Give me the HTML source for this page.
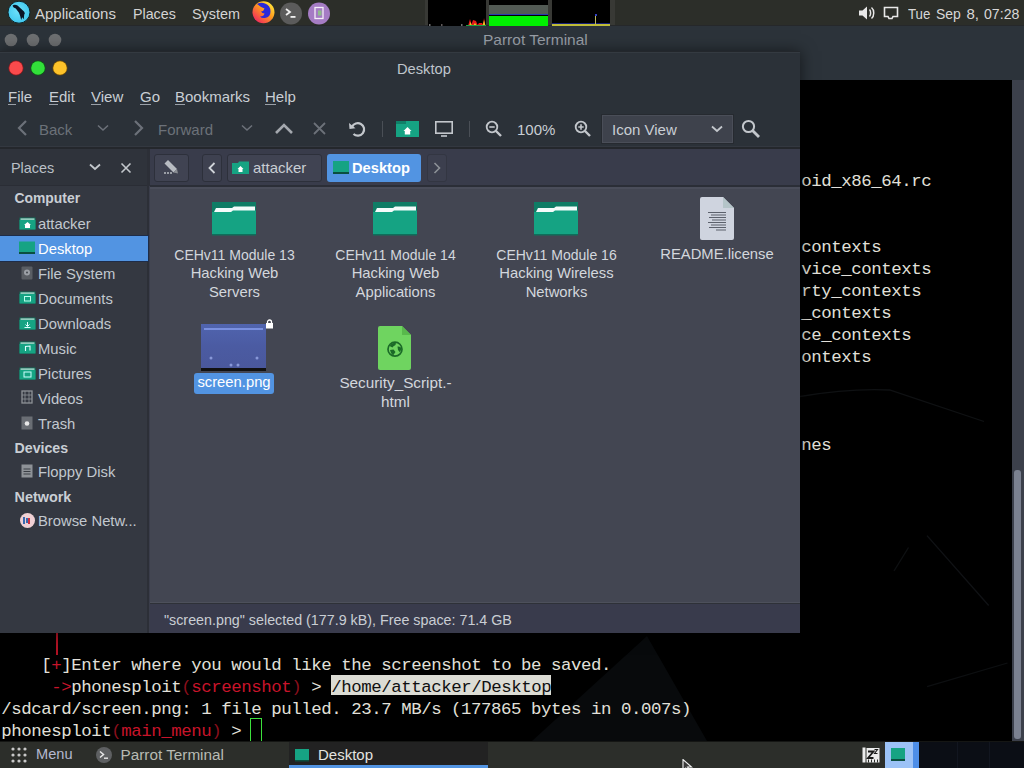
<!DOCTYPE html>
<html><head><meta charset="utf-8">
<style>
*{margin:0;padding:0;box-sizing:border-box}
html,body{width:1024px;height:768px;overflow:hidden;background:#000;font-family:'Liberation Sans',sans-serif;position:relative}
.r{position:absolute;display:block}
.t{position:absolute;white-space:pre;line-height:1}
.c{text-align:center}
.m{position:absolute;white-space:pre;font-family:'Liberation Mono',monospace;font-size:17.4px;letter-spacing:-0.44px;line-height:22px;height:22px}
</style></head><body>
<div class="r" style="left:0;top:0;width:1024px;height:26px;z-index:5">
<div class="r" style="left:0px;top:0px;width:1024px;height:25px;background:#2c2e29;"></div>
<div class="r" style="left:0px;top:25px;width:1024px;height:1px;background:#26282a;"></div>
<svg class="r" style="left:7px;top:1px;" width="24" height="24" viewBox="0 0 24 24"><defs><radialGradient id="plg" cx="0.45" cy="0.45" r="0.6"><stop offset="0" stop-color="#6ee0fa"/><stop offset="1" stop-color="#3cc6ee"/></radialGradient></defs><circle cx="12" cy="11.2" r="11" fill="url(#plg)" stroke="#10262c" stroke-width="1"/><path d="M5.5 4.8 Q7.5 3 10.5 4.6 L17 10.5 Q18.6 12.2 17.2 13.8 L16.8 18.2 L15.2 16.2 L14.2 19 Q13.2 14.5 12 11.8 L8.8 7.5 Q6.2 7 5.5 4.8 Z" fill="#0a1426"/></svg>
<div class="t" style="left:35px;top:6.30px;font-size:15px;color:#d4d4d4;font-weight:normal;font-family:'Liberation Sans',sans-serif;">Applications</div>
<div class="t" style="left:132.5px;top:6.30px;font-size:15px;color:#d4d4d4;font-weight:normal;font-family:'Liberation Sans',sans-serif;transform:scaleX(0.95);transform-origin:0 0">Places</div>
<div class="t" style="left:191.5px;top:6.30px;font-size:15px;color:#d4d4d4;font-weight:normal;font-family:'Liberation Sans',sans-serif;transform:scaleX(0.96);transform-origin:0 0">System</div>
<svg class="r" style="left:252px;top:1px;" width="24" height="24" viewBox="0 0 24 24"><defs><linearGradient id="ff" x1="0.9" y1="0.1" x2="0.2" y2="0.9"><stop offset="0" stop-color="#ffe83a"/><stop offset="0.45" stop-color="#ff9a1e"/><stop offset="1" stop-color="#f2305a"/></linearGradient></defs><circle cx="11.5" cy="11.3" r="11" fill="url(#ff)"/><path d="M5 3 Q9 1 13 2.5 Q18.5 4.5 18.5 10.5 Q18.5 16 13 17 Q9.5 17.5 8 15.5 Q12 15.5 12.5 12.5 Q10 12.5 9 10.5 Q12 10 12.5 7.5 Q9 6.5 5 3 Z" fill="#2a2ad8"/></svg>
<svg class="r" style="left:279px;top:1px;" width="24" height="24" viewBox="0 0 24 24"><circle cx="12" cy="12.5" r="11" fill="#5b5b5b"/><path d="M7 8 L11 11 L7 14" stroke="#f0f0f0" stroke-width="1.8" fill="none"/><rect x="11.5" y="15" width="5" height="1.8" fill="#f0f0f0"/></svg>
<svg class="r" style="left:307px;top:1px;" width="24" height="24" viewBox="0 0 24 24"><circle cx="12" cy="12.5" r="11" fill="#a57cc4"/><rect x="8" y="6.5" width="8" height="11" fill="none" stroke="#f4eef8" stroke-width="1.3"/><rect x="11" y="9.5" width="3.5" height="5" fill="#8fbf8a"/></svg>
<div class="r" style="left:425px;top:0px;width:190px;height:25px;background:#383935;"></div>
<div class="r" style="left:428px;top:0px;width:58px;height:26px;background:#000;"></div>
<svg class="r" style="left:428px;top:0px;" width="58" height="26" viewBox="0 0 58 26"><rect x="1" y="24" width="1.5" height="2" fill="#707070"/><rect x="13" y="24" width="1.5" height="2" fill="#605a5a"/><rect x="33" y="24" width="1.5" height="2" fill="#707070"/><path d="M40 26 L42 19 L44 26 Z M43 26 L45 20 L48 21 L50 26 Z M49 26 L51 23 L54 23 L56 26 Z M55 26 L56 18 L57.5 26 Z" fill="#e81818"/><path d="M41 26 L42.5 22 L44 26 Z M54.5 26 L56 20 L57.5 26 Z M45 26 L47 23 L49 26 Z" fill="#e8d020"/><rect x="38" y="25" width="20" height="1" fill="#20a040"/></svg>
<div class="r" style="left:489px;top:0px;width:59px;height:26px;background:#000;"></div>
<div class="r" style="left:489px;top:5px;width:59px;height:8.5px;background:#525a54;"></div>
<div class="r" style="left:489px;top:13.5px;width:59px;height:1.5px;background:#2a3ab0;"></div>
<div class="r" style="left:489px;top:15.5px;width:59px;height:10.5px;background:#00f000;"></div>
<div class="r" style="left:552px;top:0px;width:58px;height:26px;background:#000;"></div>
<div class="r" style="left:552px;top:23px;width:58px;height:1px;background:#16207a;"></div>
<div class="r" style="left:552px;top:24px;width:58px;height:2px;background:#c0bc38;"></div>
<div class="r" style="left:595px;top:15px;width:1.2px;height:9px;background:#b8b860;"></div>
<div class="r" style="left:594.5px;top:14px;width:2px;height:2px;background:#3040c0;"></div>
<svg class="r" style="left:857px;top:5px;" width="20" height="16" viewBox="0 0 20 16"><path d="M2 5.5 L5.5 5.5 L10 1.5 L10 14.5 L5.5 10.5 L2 10.5 Z" fill="#e8e8e8"/><path d="M12.5 4.5 C14 6 14 10 12.5 11.5" stroke="#e8e8e8" stroke-width="1.5" fill="none"/><path d="M14.5 2.5 C17.5 5 17.5 11 14.5 13.5" stroke="#e8e8e8" stroke-width="1.5" fill="none"/></svg>
<svg class="r" style="left:883px;top:6px;" width="17" height="15" viewBox="0 0 17 15"><path d="M1.5 1.5 L14.5 1.5 L14.5 10.5 L10 10.5 L9 12.5 L6 12.5 L5 10.5 L1.5 10.5 Z" fill="none" stroke="#e8e8e8" stroke-width="1.6"/></svg>
<div class="t" style="left:908px;top:6.30px;font-size:15px;color:#d8d8d8;font-weight:normal;font-family:'Liberation Sans',sans-serif;transform:scaleX(0.885);transform-origin:0 0">Tue</div>
<div class="t" style="left:935.6px;top:6.30px;font-size:15px;color:#d8d8d8;font-weight:normal;font-family:'Liberation Sans',sans-serif;transform:scaleX(0.93);transform-origin:0 0">Sep</div>
<div class="t" style="left:966.5px;top:6.30px;font-size:15px;color:#d8d8d8;font-weight:normal;font-family:'Liberation Sans',sans-serif;">8,</div>
<div class="t" style="left:983.5px;top:6.64px;font-size:14.6px;color:#d8d8d8;font-weight:normal;font-family:'Liberation Sans',sans-serif;transform:scaleX(0.97);transform-origin:0 0">07:28</div>
</div>
<div class="r" style="left:0px;top:26px;width:1024px;height:54px;background:#2c333a;"></div>
<svg class="r" style="left:3px;top:32px;" width="16" height="16" viewBox="0 0 16 16"><circle cx="8" cy="8" r="6.3" fill="#6d6f71"/></svg>
<svg class="r" style="left:25px;top:32px;" width="16" height="16" viewBox="0 0 16 16"><circle cx="8" cy="8" r="6.3" fill="#6d6f71"/></svg>
<svg class="r" style="left:47px;top:32px;" width="16" height="16" viewBox="0 0 16 16"><circle cx="8" cy="8" r="6.3" fill="#6d6f71"/></svg>
<div class="t" style="left:483px;top:32.38px;font-size:15.5px;color:#989ea6;font-weight:normal;font-family:'Liberation Sans',sans-serif;">Parrot Terminal</div>
<div class="r" style="left:0px;top:80px;width:1012px;height:661px;background:#000;"></div>
<svg class="r" style="left:0px;top:80px;" width="1012" height="661" viewBox="0 0 1012 661"><path d="M532 661 L647 556 L707 661 Z" fill="#080a0c"/><path d="M800 316.5 Q850 308 889.6 310 L984 341.5" stroke="#0f1113" stroke-width="1.3" fill="none"/><path d="M927 455.6 L988.7 525.5" stroke="#101215" stroke-width="1.3" fill="none"/><path d="M908.5 467.5 L894 491" stroke="#0e1012" stroke-width="1.3" fill="none"/><path d="M927 606.6 L1007.5 583" stroke="#0d0f11" stroke-width="1.3" fill="none"/></svg>
<div class="r" style="left:1012px;top:80px;width:12px;height:661px;background:#3c404b;"></div>
<div class="r" style="left:1014px;top:470px;width:7px;height:269px;background:#7b8190;border-radius:3px"></div>
<div class="m" style="left:801.3px;top:171px;color:#e2e0da">oid_x86_64.rc</div>
<div class="m" style="left:801.3px;top:237px;color:#e2e0da">contexts</div>
<div class="m" style="left:801.3px;top:259px;color:#e2e0da">vice_contexts</div>
<div class="m" style="left:801.3px;top:281px;color:#e2e0da">rty_contexts</div>
<div class="m" style="left:801.3px;top:303px;color:#e2e0da">_contexts</div>
<div class="m" style="left:801.3px;top:325px;color:#e2e0da">ce_contexts</div>
<div class="m" style="left:801.3px;top:347px;color:#e2e0da">ontexts</div>
<div class="m" style="left:801.3px;top:435px;color:#e2e0da">nes</div>
<div class="r" style="left:56px;top:633px;width:1.5px;height:22px;background:#b01224;"></div>
<div class="m" style="left:41.3px;top:655px;color:#e2e0da">[</div>
<div class="m" style="left:51.3px;top:655px;color:#c8142a">+</div>
<div class="m" style="left:61.3px;top:655px;color:#e2e0da">]Enter where you would like the screenshot to be saved.</div>
<div class="m" style="left:51.3px;top:677px;color:#c8142a">-></div>
<div class="m" style="left:71.3px;top:677px;color:#e2e0da">phonesploit</div>
<div class="m" style="left:181.3px;top:677px;color:#8a0f1c">(</div>
<div class="m" style="left:191.3px;top:677px;color:#c8142a">screenshot</div>
<div class="m" style="left:291.3px;top:677px;color:#8a0f1c">)</div>
<div class="m" style="left:301.3px;top:677px;color:#e2e0da"> > </div>
<div class="r" style="left:331px;top:675px;width:220px;height:20px;background:#dcdcd4;"></div>
<div class="m" style="left:331.3px;top:677px;color:#101010">/home/attacker/Desktop</div>
<div class="m" style="left:1.3px;top:699px;color:#e2e0da">/sdcard/screen.png: 1 file pulled. 23.7 MB/s (177865 bytes in 0.007s)</div>
<div class="m" style="left:1.3px;top:721px;color:#e2e0da">phonesploit</div>
<div class="m" style="left:111.3px;top:721px;color:#8a0f1c">(</div>
<div class="m" style="left:121.3px;top:721px;color:#c8142a">main_menu</div>
<div class="m" style="left:211.3px;top:721px;color:#8a0f1c">)</div>
<div class="m" style="left:221.3px;top:721px;color:#e2e0da"> > </div>
<div class="r" style="left:250px;top:718px;width:12px;height:23.5px;background:transparent;border:1.5px solid #3ce03c"></div>
<div id="fmwrap">
<div class="r" style="left:0px;top:52px;width:800px;height:581px;background:#2b3138;box-shadow:0 0 14px 1px rgba(0,0,0,0.5)"></div>
<div class="r" style="left:0px;top:51px;width:800px;height:1px;background:#23272c;"></div>
<div class="r" style="left:0px;top:52px;width:800px;height:1px;background:#343a41;"></div>
<svg class="r" style="left:7px;top:59px;" width="18" height="18" viewBox="0 0 18 18"><circle cx="9" cy="9" r="7.6" fill="#8a1a1e"/><circle cx="9" cy="9" r="6.8" fill="#fa4a4c"/></svg>
<svg class="r" style="left:29px;top:59px;" width="18" height="18" viewBox="0 0 18 18"><circle cx="9" cy="9" r="7.6" fill="#0c5a14"/><circle cx="9" cy="9" r="6.8" fill="#32e03a"/></svg>
<svg class="r" style="left:51px;top:59px;" width="18" height="18" viewBox="0 0 18 18"><circle cx="9" cy="9" r="7.6" fill="#6a4a08"/><circle cx="9" cy="9" r="6.8" fill="#fdc22a"/></svg>
<div class="t" style="left:397px;top:61.56px;font-size:14.7px;color:#bfc5cc;font-weight:normal;font-family:'Liberation Sans',sans-serif;">Desktop</div>
<div class="t" style="left:8px;top:89.30px;font-size:15px;color:#c9ced4;font-weight:normal;font-family:'Liberation Sans',sans-serif;">File</div>
<div class="t" style="left:49px;top:89.30px;font-size:15px;color:#c9ced4;font-weight:normal;font-family:'Liberation Sans',sans-serif;">Edit</div>
<div class="t" style="left:91px;top:89.30px;font-size:15px;color:#c9ced4;font-weight:normal;font-family:'Liberation Sans',sans-serif;">View</div>
<div class="t" style="left:140px;top:89.30px;font-size:15px;color:#c9ced4;font-weight:normal;font-family:'Liberation Sans',sans-serif;">Go</div>
<div class="t" style="left:175px;top:89.30px;font-size:15px;color:#c9ced4;font-weight:normal;font-family:'Liberation Sans',sans-serif;">Bookmarks</div>
<div class="t" style="left:265px;top:89.30px;font-size:15px;color:#c9ced4;font-weight:normal;font-family:'Liberation Sans',sans-serif;">Help</div>
<div class="r" style="left:8px;top:104px;width:8px;height:1px;background:#9aa0a8;"></div>
<div class="r" style="left:49px;top:104px;width:9px;height:1px;background:#9aa0a8;"></div>
<div class="r" style="left:91px;top:104px;width:10px;height:1px;background:#9aa0a8;"></div>
<div class="r" style="left:140px;top:104px;width:11px;height:1px;background:#9aa0a8;"></div>
<div class="r" style="left:175px;top:104px;width:10px;height:1px;background:#9aa0a8;"></div>
<div class="r" style="left:265px;top:104px;width:11px;height:1px;background:#9aa0a8;"></div>
<svg class="r" style="left:12px;top:118px;" width="20" height="20" viewBox="0 0 20 20"><path d="M14 3 L7 10 L14 17" stroke="#6c7179" stroke-width="2.2" fill="none"/></svg>
<div class="t" style="left:39px;top:122.30px;font-size:15px;color:#6c7179;font-weight:normal;font-family:'Liberation Sans',sans-serif;">Back</div>
<svg class="r" style="left:95px;top:121px;" width="16" height="14" viewBox="0 0 16 14"><path d="M3 4.5 L8 9 L13 4.5" stroke="#6c7179" stroke-width="1.6" fill="none"/></svg>
<svg class="r" style="left:129px;top:118px;" width="20" height="20" viewBox="0 0 20 20"><path d="M6 3 L13 10 L6 17" stroke="#6c7179" stroke-width="2.2" fill="none"/></svg>
<div class="t" style="left:158px;top:122.30px;font-size:15px;color:#6c7179;font-weight:normal;font-family:'Liberation Sans',sans-serif;">Forward</div>
<svg class="r" style="left:239px;top:121px;" width="16" height="14" viewBox="0 0 16 14"><path d="M3 4.5 L8 9 L13 4.5" stroke="#6c7179" stroke-width="1.6" fill="none"/></svg>
<svg class="r" style="left:273px;top:120px;" width="22" height="18" viewBox="0 0 22 18"><path d="M3 13 L11 5 L19 13" stroke="#a4a8ae" stroke-width="2.6" fill="none"/></svg>
<svg class="r" style="left:311px;top:120px;" width="18" height="18" viewBox="0 0 18 18"><path d="M3 3 L14 14 M14 3 L3 14" stroke="#6c7179" stroke-width="1.8" fill="none"/></svg>
<svg class="r" style="left:347px;top:119px;" width="20" height="20" viewBox="0 0 20 20"><path d="M5 8 A6.3 6.3 0 1 1 6.5 15" stroke="#c3c7cc" stroke-width="2.2" fill="none"/><path d="M2 4 L2.5 10 L8.5 9.2 Z" fill="#c3c7cc"/></svg>
<div class="r" style="left:382px;top:121px;width:1px;height:16px;background:#4a4f56;"></div>
<svg class="r" style="left:396px;top:120px;" width="23" height="18" viewBox="0 0 23 18"><path d="M0 3 L9 3 L10 1 L23 1 L23 17 L0 17 Z" fill="#16a383"/><rect x="0" y="1" width="10" height="3" fill="#108068"/><path d="M7.5 11 L11.5 7 L15.5 11 L14.2 11 L14.2 14.5 L8.8 14.5 L8.8 11 Z" fill="#fff"/></svg>
<svg class="r" style="left:434px;top:120px;" width="20" height="18" viewBox="0 0 20 18"><rect x="1.8" y="1.8" width="16.4" height="11.4" fill="none" stroke="#c3c7cc" stroke-width="1.6"/><rect x="7" y="15.2" width="6" height="1.6" fill="#c3c7cc"/></svg>
<div class="r" style="left:469px;top:121px;width:1px;height:16px;background:#4a4f56;"></div>
<svg class="r" style="left:484px;top:119px;" width="20" height="20" viewBox="0 0 20 20"><circle cx="8" cy="8" r="5.3" stroke="#c3c7cc" stroke-width="1.8" fill="none"/><path d="M12 12 L17 17" stroke="#c3c7cc" stroke-width="2.4"/><path d="M5.3 8 L10.7 8" stroke="#c3c7cc" stroke-width="1.6"/></svg>
<div class="t" style="left:517px;top:122.30px;font-size:15px;color:#c9ced4;font-weight:normal;font-family:'Liberation Sans',sans-serif;">100%</div>
<svg class="r" style="left:573px;top:119px;" width="20" height="20" viewBox="0 0 20 20"><circle cx="8" cy="8" r="5.3" stroke="#c3c7cc" stroke-width="1.8" fill="none"/><path d="M12 12 L17 17" stroke="#c3c7cc" stroke-width="2.4"/><path d="M5.3 8 L10.7 8 M8 5.3 L8 10.7" stroke="#c3c7cc" stroke-width="1.6"/></svg>
<div class="r" style="left:602px;top:115px;width:131px;height:28px;background:#3e424c;border:1px solid #4a4e58;box-shadow:0 0 0 1px #262a30"></div>
<div class="t" style="left:612px;top:121.80px;font-size:15px;color:#c9ced4;font-weight:normal;font-family:'Liberation Sans',sans-serif;">Icon View</div>
<svg class="r" style="left:709px;top:122px;" width="16" height="14" viewBox="0 0 16 14"><path d="M3 4.5 L8 9 L13 4.5" stroke="#c3c7cc" stroke-width="1.8" fill="none"/></svg>
<svg class="r" style="left:740px;top:118px;" width="22" height="22" viewBox="0 0 22 22"><circle cx="8.5" cy="8.5" r="5.6" stroke="#c3c7cc" stroke-width="2" fill="none"/><path d="M12.5 12.5 L19 19" stroke="#c3c7cc" stroke-width="2.8"/></svg>
<div class="r" style="left:0px;top:146px;width:800px;height:1px;background:#333840;"></div>
<div class="r" style="left:0px;top:147px;width:800px;height:2px;background:#24272c;"></div>
<div class="r" style="left:0px;top:149px;width:148px;height:37px;background:#2f333b;"></div>
<div class="t" style="left:11px;top:160.81px;font-size:14.4px;color:#bac0c7;font-weight:normal;font-family:'Liberation Sans',sans-serif;">Places</div>
<svg class="r" style="left:87px;top:160px;" width="16" height="14" viewBox="0 0 16 14"><path d="M3 4.5 L8 9 L13 4.5" stroke="#c3c7cc" stroke-width="1.8" fill="none"/></svg>
<svg class="r" style="left:119px;top:161px;" width="15" height="14" viewBox="0 0 15 14"><path d="M2.5 2.5 L11.5 11.5 M11.5 2.5 L2.5 11.5" stroke="#c3c7cc" stroke-width="1.6" fill="none"/></svg>
<div class="r" style="left:0px;top:185px;width:148px;height:1px;background:#2a2d35;"></div>
<div class="r" style="left:147px;top:149px;width:3px;height:484px;background:#2c2f37;"></div>
<div class="r" style="left:149px;top:186px;width:1px;height:447px;background:#3a3d4a;"></div>
<div class="r" style="left:150px;top:149px;width:650px;height:37px;background:#393c4b;"></div>
<div class="r" style="left:150px;top:185px;width:650px;height:2px;background:#2b2e37;"></div>
<div class="r" style="left:150px;top:187px;width:650px;height:2px;background:#4a4d5a;"></div>
<div class="r" style="left:154px;top:154px;width:35px;height:28px;background:#404352;border:1px solid #2d303b;border-radius:3px"></div>
<svg class="r" style="left:160px;top:158px;" width="22" height="20" viewBox="0 0 22 20"><path d="M8 2 L17 11 L13.5 14.5 L4.5 5.5 Z" fill="#b8bcc2"/><path d="M13.5 14.5 L17 11 L18 15.5 Z" fill="#8a8e94"/><circle cx="5" cy="15" r="1" fill="#b8bcc2"/><circle cx="8" cy="15" r="1" fill="#b8bcc2"/><circle cx="11" cy="15" r="1" fill="#b8bcc2"/></svg>
<div class="r" style="left:202px;top:154px;width:20px;height:28px;background:#3e4150;border:1px solid #2d303b;border-radius:3px"></div>
<svg class="r" style="left:204px;top:160px;" width="16" height="16" viewBox="0 0 16 16"><path d="M10.5 3 L5.5 8 L10.5 13" stroke="#d0d4d9" stroke-width="1.8" fill="none"/></svg>
<div class="r" style="left:227px;top:154px;width:95px;height:28px;background:#404352;border:1px solid #2d303b;border-radius:3px"></div>
<svg class="r" style="left:232px;top:161px;" width="17" height="13" viewBox="0 0 17 13"><path d="M0 2 L6 2 L7 0.5 L17 0.5 L17 13 L0 13 Z" fill="#16a383"/><path d="M5.5 8 L8.5 5 L11.5 8 L10.5 8 L10.5 11 L6.5 11 L6.5 8 Z" fill="#fff"/></svg>
<div class="t" style="left:253px;top:160.30px;font-size:15px;color:#c9ced4;font-weight:normal;font-family:'Liberation Sans',sans-serif;">attacker</div>
<div class="r" style="left:327px;top:154px;width:94px;height:28px;background:#5294e2;border-radius:3px"></div>
<svg class="r" style="left:333px;top:161px;" width="16" height="13" viewBox="0 0 16 13"><rect x="0" y="0" width="16" height="13" fill="#16a383"/><rect x="0" y="11" width="16" height="2" fill="#0b4f40"/></svg>
<div class="t" style="left:352px;top:160.56px;font-size:14.7px;color:#ffffff;font-weight:bold;font-family:'Liberation Sans',sans-serif;">Desktop</div>
<div class="r" style="left:427px;top:154px;width:20px;height:28px;background:#3c3f4e;border:1px solid #333642;border-radius:3px"></div>
<svg class="r" style="left:429px;top:160px;" width="16" height="16" viewBox="0 0 16 16"><path d="M5.5 3 L10.5 8 L5.5 13" stroke="#8d9197" stroke-width="1.6" fill="none"/></svg>
<div class="r" style="left:0px;top:186px;width:147px;height:447px;background:#343841;"></div>
<div class="t" style="left:14.5px;top:192.23px;font-size:13.9px;color:#c9ced4;font-weight:bold;font-family:'Liberation Sans',sans-serif;">Computer</div>
<div class="r" style="left:0px;top:235px;width:149px;height:27px;background:#1e2c48;"></div>
<div class="r" style="left:0px;top:236px;width:148px;height:25px;background:#5294e2;"></div>
<div class="t" style="left:38px;top:216.97px;font-size:14.8px;color:#c2c8cf;font-weight:normal;font-family:'Liberation Sans',sans-serif;">attacker</div>
<svg class="r" style="left:19px;top:217px;" width="17" height="13" viewBox="0 0 17 13"><rect x="0.5" y="0.5" width="16" height="12" fill="#0f6e5a"/><rect x="1.5" y="1.5" width="14" height="1.3" fill="#d8efe8"/><rect x="0.5" y="2.8" width="16" height="9.7" fill="#16a383"/><path d="M5 8 L8.5 5 L12 8 L11 8 L11 11 L6 11 L6 8 Z" fill="#fff"/></svg>
<div class="t" style="left:38px;top:241.97px;font-size:14.8px;color:#ffffff;font-weight:normal;font-family:'Liberation Sans',sans-serif;">Desktop</div>
<svg class="r" style="left:19px;top:241px;" width="17" height="13" viewBox="0 0 17 13"><rect x="0" y="0.5" width="16" height="12.5" fill="#16a383"/><rect x="0" y="11" width="16" height="2" fill="#0b4f40"/></svg>
<div class="t" style="left:38px;top:266.97px;font-size:14.8px;color:#c2c8cf;font-weight:normal;font-family:'Liberation Sans',sans-serif;">File System</div>
<svg class="r" style="left:21px;top:266px;" width="13" height="14" viewBox="0 0 13 14"><rect x="0.5" y="0.5" width="11" height="13" fill="#5a5e64" rx="1"/><circle cx="6" cy="6.5" r="3" fill="#9ca0a6"/><circle cx="6" cy="6.5" r="1" fill="#45494f"/></svg>
<div class="t" style="left:38px;top:291.97px;font-size:14.8px;color:#c2c8cf;font-weight:normal;font-family:'Liberation Sans',sans-serif;">Documents</div>
<svg class="r" style="left:19px;top:291px;" width="17" height="13" viewBox="0 0 17 13"><rect x="0.5" y="0.5" width="16" height="12" fill="#0f6e5a"/><rect x="1.5" y="1.5" width="14" height="1.3" fill="#d8efe8"/><rect x="0.5" y="2.8" width="16" height="9.7" fill="#16a383"/><rect x="5.5" y="5.5" width="6" height="4.5" fill="none" stroke="#bfe" stroke-width="1"/></svg>
<div class="t" style="left:38px;top:316.97px;font-size:14.8px;color:#c2c8cf;font-weight:normal;font-family:'Liberation Sans',sans-serif;">Downloads</div>
<svg class="r" style="left:19px;top:317px;" width="17" height="13" viewBox="0 0 17 13"><rect x="0.5" y="0.5" width="16" height="12" fill="#0f6e5a"/><rect x="1.5" y="1.5" width="14" height="1.3" fill="#d8efe8"/><rect x="0.5" y="2.8" width="16" height="9.7" fill="#16a383"/><path d="M8.5 5 L8.5 9 M6.5 7.5 L8.5 9.5 L10.5 7.5 M5.5 10.5 L11.5 10.5" stroke="#dff" stroke-width="1" fill="none"/></svg>
<div class="t" style="left:38px;top:341.97px;font-size:14.8px;color:#c2c8cf;font-weight:normal;font-family:'Liberation Sans',sans-serif;">Music</div>
<svg class="r" style="left:19px;top:341px;" width="17" height="13" viewBox="0 0 17 13"><rect x="0.5" y="0.5" width="16" height="12" fill="#0f6e5a"/><rect x="1.5" y="1.5" width="14" height="1.3" fill="#d8efe8"/><rect x="0.5" y="2.8" width="16" height="9.7" fill="#16a383"/><path d="M6.5 10 L6.5 5.5 L11 5 L11 9.5" stroke="#dff" stroke-width="1.1" fill="none"/></svg>
<div class="t" style="left:38px;top:366.97px;font-size:14.8px;color:#c2c8cf;font-weight:normal;font-family:'Liberation Sans',sans-serif;">Pictures</div>
<svg class="r" style="left:19px;top:367px;" width="17" height="13" viewBox="0 0 17 13"><rect x="0.5" y="0.5" width="16" height="12" fill="#0f6e5a"/><rect x="1.5" y="1.5" width="14" height="1.3" fill="#d8efe8"/><rect x="0.5" y="2.8" width="16" height="9.7" fill="#16a383"/><rect x="5" y="5" width="7" height="5" fill="none" stroke="#cff" stroke-width="1"/></svg>
<div class="t" style="left:38px;top:391.97px;font-size:14.8px;color:#c2c8cf;font-weight:normal;font-family:'Liberation Sans',sans-serif;">Videos</div>
<svg class="r" style="left:21px;top:390px;" width="13" height="14" viewBox="0 0 13 14"><rect x="1" y="1" width="10" height="12" fill="none" stroke="#8e9297" stroke-width="1.3"/><path d="M1 5 L11 5 M1 9 L11 9 M4 1 L4 13 M8 1 L8 13" stroke="#8e9297" stroke-width="0.8"/></svg>
<div class="t" style="left:38px;top:416.97px;font-size:14.8px;color:#c2c8cf;font-weight:normal;font-family:'Liberation Sans',sans-serif;">Trash</div>
<svg class="r" style="left:21px;top:416px;" width="13" height="14" viewBox="0 0 13 14"><rect x="0.5" y="0.5" width="11" height="13" fill="#6a6e74"/><circle cx="6" cy="7.5" r="2.3" fill="#e8e8e8"/></svg>
<div class="t" style="left:38px;top:465.47px;font-size:14.8px;color:#c2c8cf;font-weight:normal;font-family:'Liberation Sans',sans-serif;">Floppy Disk</div>
<svg class="r" style="left:21px;top:464px;" width="13" height="14" viewBox="0 0 13 14"><rect x="0.5" y="0.5" width="11" height="13" fill="#8e9297"/><path d="M2.5 5 L9.5 5 M2.5 7.5 L9.5 7.5 M2.5 10 L9.5 10" stroke="#3a3e44" stroke-width="1"/></svg>
<div class="t" style="left:38px;top:514.47px;font-size:14.8px;color:#c2c8cf;font-weight:normal;font-family:'Liberation Sans',sans-serif;">Browse Netw...</div>
<svg class="r" style="left:19px;top:512px;" width="17" height="17" viewBox="0 0 17 17"><circle cx="8.5" cy="8.5" r="7.5" fill="#f0d0d4"/><path d="M5 5 L5 12 M8 6 L8 11" stroke="#3a6ab0" stroke-width="2"/><path d="M10 6 L10 12" stroke="#d03040" stroke-width="2"/></svg>
<div class="t" style="left:14.5px;top:440.98px;font-size:14.2px;color:#c9ced4;font-weight:bold;font-family:'Liberation Sans',sans-serif;">Devices</div>
<div class="t" style="left:14.5px;top:489.81px;font-size:14.4px;color:#c9ced4;font-weight:bold;font-family:'Liberation Sans',sans-serif;">Network</div>
<div class="r" style="left:150px;top:189px;width:650px;height:414px;background:#434652;"></div>
<div class="r" style="left:150px;top:602px;width:650px;height:1px;background:#4d505b;"></div>
<div class="r" style="left:150px;top:603px;width:650px;height:1px;background:#2e3138;"></div>
<div class="r" style="left:150px;top:604px;width:650px;height:29px;background:#393b4c;"></div>
<div class="t" style="left:164px;top:612.90px;font-size:14.3px;color:#c9ced4;font-weight:normal;font-family:'Liberation Sans',sans-serif;">"screen.png" selected (177.9 kB), Free space: 71.4 GB</div>
<svg class="r" style="left:212px;top:201px;" width="46" height="36" viewBox="0 0 46 36"><path d="M0 1 L44 1 L44 12 L0 12 Z" fill="#0f7c65"/><path d="M4 7 L20 7 L22 5.5 L43 5.5 L43 11 L2 11 Z" fill="#f4fbfa"/><path d="M0 11 L19 11 L21 9.5 L44 9.5 L44 34 L0 34 Z" fill="#15a383"/><rect x="0" y="33" width="44" height="1.5" fill="#0e6f5b"/></svg>
<svg class="r" style="left:373px;top:201px;" width="46" height="36" viewBox="0 0 46 36"><path d="M0 1 L44 1 L44 12 L0 12 Z" fill="#0f7c65"/><path d="M4 7 L20 7 L22 5.5 L43 5.5 L43 11 L2 11 Z" fill="#f4fbfa"/><path d="M0 11 L19 11 L21 9.5 L44 9.5 L44 34 L0 34 Z" fill="#15a383"/><rect x="0" y="33" width="44" height="1.5" fill="#0e6f5b"/></svg>
<svg class="r" style="left:534px;top:201px;" width="46" height="36" viewBox="0 0 46 36"><path d="M0 1 L44 1 L44 12 L0 12 Z" fill="#0f7c65"/><path d="M4 7 L20 7 L22 5.5 L43 5.5 L43 11 L2 11 Z" fill="#f4fbfa"/><path d="M0 11 L19 11 L21 9.5 L44 9.5 L44 34 L0 34 Z" fill="#15a383"/><rect x="0" y="33" width="44" height="1.5" fill="#0e6f5b"/></svg>
<svg class="r" style="left:699px;top:196px;" width="36" height="46" viewBox="0 0 36 46"><path d="M1 3 Q1 1 3 1 L24 1 L35 12 L35 42 Q35 44 33 44 L3 44 Q1 44 1 42 Z" fill="#cfd4df"/><path d="M24 1 L35 12 L24 12 Z" fill="#b4c4c8"/><path d="M9 16.5 L27 16.5 M12 19 L27 19 M10 21.5 L27 21.5 M13 24 L27 24 M9 26.5 L27 26.5 M12 29 L27 29 M10 31.5 L27 31.5 M17 34 L27 34 " stroke="#5c616c" stroke-width="1.1"/></svg>
<div class="t c" style="left:134.5px;width:200px;top:248.15px;font-size:14px;color:#d3d7dd">CEHv11 Module 13</div>
<div class="t c" style="left:134.5px;width:200px;top:266.47px;font-size:14.8px;color:#d3d7dd">Hacking Web</div>
<div class="t c" style="left:134.5px;width:200px;top:285.47px;font-size:14.8px;color:#d3d7dd">Servers</div>
<div class="t c" style="left:295.5px;width:200px;top:248.15px;font-size:14px;color:#d3d7dd">CEHv11 Module 14</div>
<div class="t c" style="left:295.5px;width:200px;top:266.47px;font-size:14.8px;color:#d3d7dd">Hacking Web</div>
<div class="t c" style="left:295.5px;width:200px;top:285.47px;font-size:14.8px;color:#d3d7dd">Applications</div>
<div class="t c" style="left:456.5px;width:200px;top:248.15px;font-size:14px;color:#d3d7dd">CEHv11 Module 16</div>
<div class="t c" style="left:456.5px;width:200px;top:266.47px;font-size:14.8px;color:#d3d7dd">Hacking Wireless</div>
<div class="t c" style="left:456.5px;width:200px;top:285.47px;font-size:14.8px;color:#d3d7dd">Networks</div>
<div class="t c" style="left:617px;width:200px;top:247.47px;font-size:14.8px;color:#d3d7dd">README.license</div>
<svg class="r" style="left:201px;top:324px;" width="66" height="48" viewBox="0 0 66 48"><rect x="0" y="0" width="65" height="45" fill="#4a5cb0"/><rect x="0" y="0" width="65" height="45" fill="url(#thg)"/><defs><linearGradient id="thg" x1="0" y1="0" x2="0" y2="1"><stop offset="0" stop-color="#5064ae"/><stop offset="0.5" stop-color="#4b5ba2"/><stop offset="1" stop-color="#4a589c"/></linearGradient></defs><rect x="0" y="0" width="65" height="45" fill="url(#thg)"/><rect x="3" y="4" width="59" height="2" fill="#7a90e0"/><rect x="0" y="44" width="65" height="3" fill="#111"/><circle cx="10" cy="34" r="1.5" fill="#8898d8"/><circle cx="56" cy="34" r="1.5" fill="#8898d8"/><circle cx="30" cy="41" r="1.5" fill="#8898d8"/><circle cx="37" cy="41" r="1.5" fill="#8898d8"/></svg>
<svg class="r" style="left:265px;top:319px;" width="9" height="10" viewBox="0 0 9 10"><rect x="1" y="4" width="7" height="5.5" fill="#fff"/><path d="M2.5 4.5 L2.5 3 A2 2 0 0 1 6.5 3 L6.5 4.5" stroke="#fff" stroke-width="1.3" fill="none"/></svg>
<div class="r" style="left:194px;top:373px;width:80px;height:21px;background:#5294e2;border-radius:3px"></div>
<div class="t c" style="left:134px;width:200px;top:375.47px;font-size:14.8px;color:#fff">screen.png</div>
<svg class="r" style="left:377px;top:325px;" width="36" height="46" viewBox="0 0 36 46"><path d="M1 3 Q1 1 3 1 L25 1 L34 10 L34 43 Q34 45 32 45 L3 45 Q1 45 1 43 Z" fill="#6fd460"/><path d="M25 1 L34 10 L25 10 Z" fill="#58b84c"/><circle cx="18" cy="24.2" r="7" fill="none" stroke="#1b6a28" stroke-width="1.7"/><path d="M12.5 21 Q15 17.5 19 17.8 L18.5 20 Q16 21 15.5 22.5 Z M13 25 L16.5 24.5 L18.5 27 L16 30.5 L14 28 Z M20.5 21.5 Q23.5 21 24.5 23.5 L23 27.5 L21 25 Z" fill="#1b6a28"/></svg>
<div class="t c" style="left:295.5px;width:200px;top:375.05px;font-size:15.3px;color:#d3d7dd">Security_Script.-</div>
<div class="t c" style="left:295.5px;width:200px;top:394.05px;font-size:15.3px;color:#d3d7dd">html</div>
</div>
<div class="r" style="left:0px;top:741px;width:1024px;height:1px;background:#151614;"></div>
<div class="r" style="left:0px;top:742px;width:1024px;height:26px;background:#2c2e2a;"></div>
<svg class="r" style="left:10px;top:746px;" width="20" height="18" viewBox="0 0 20 18"><circle cx="3" cy="3" r="1.6" fill="#c8c8c8"/><circle cx="3" cy="9" r="1.6" fill="#c8c8c8"/><circle cx="3" cy="15" r="1.6" fill="#c8c8c8"/><circle cx="9" cy="3" r="1.6" fill="#c8c8c8"/><circle cx="9" cy="9" r="1.6" fill="#c8c8c8"/><circle cx="9" cy="15" r="1.6" fill="#c8c8c8"/><circle cx="15" cy="3" r="1.6" fill="#c8c8c8"/><circle cx="15" cy="9" r="1.6" fill="#c8c8c8"/><circle cx="15" cy="15" r="1.6" fill="#c8c8c8"/></svg>
<div class="t" style="left:36px;top:747.14px;font-size:14.6px;color:#b4b8d0;font-weight:normal;font-family:'Liberation Sans',sans-serif;">Menu</div>
<svg class="r" style="left:95px;top:746px;" width="18" height="18" viewBox="0 0 18 18"><circle cx="9" cy="9" r="8" fill="#5e6062"/><path d="M5 5.5 L8.5 8.5 L5 11.5" stroke="#e8e8e8" stroke-width="1.5" fill="none"/><rect x="9" y="11.5" width="4" height="1.4" fill="#e8e8e8"/></svg>
<div class="t" style="left:120.5px;top:746.55px;font-size:15.3px;color:#b8bbb4;font-weight:normal;font-family:'Liberation Sans',sans-serif;">Parrot Terminal</div>
<div class="r" style="left:289px;top:742px;width:199px;height:26px;background:#222222;"></div>
<div class="r" style="left:289px;top:765px;width:199px;height:3px;background:#5294e2;"></div>
<svg class="r" style="left:295px;top:749px;" width="15" height="13" viewBox="0 0 15 13"><rect x="0" y="0" width="14" height="12" fill="#16a383"/><rect x="0" y="11" width="14" height="1.5" fill="#0b4f40"/></svg>
<div class="t" style="left:318px;top:746.80px;font-size:15px;color:#e4e4e0;font-weight:normal;font-family:'Liberation Sans',sans-serif;">Desktop</div>
<svg class="r" style="left:862px;top:746px;" width="20" height="18" viewBox="0 0 20 18"><rect x="0.5" y="1.5" width="3" height="15" fill="#ececec"/><rect x="4.5" y="2" width="13" height="14.5" fill="#ececec"/><path d="M6.5 13.5 L6.5 16.5 M9.5 13.5 L9.5 16.5 M12.5 13.5 L12.5 16.5 M15.5 13.5 L15.5 16.5" stroke="#2c2e2a" stroke-width="1"/><path d="M6 5.5 L11.5 5.5 L6 12 L11.5 12" stroke="#1a1a1a" stroke-width="1.8" fill="none"/><path d="M12.5 3.5 L15.5 3.5 L12.5 7.5 L15.5 7.5" stroke="#1a1a1a" stroke-width="1.1" fill="none"/></svg>
<div class="r" style="left:885px;top:742px;width:34px;height:26px;background:#9cc2f6;"></div>
<div class="r" style="left:913px;top:742px;width:6px;height:26px;background:#4d8ee8;"></div>
<div class="r" style="left:891px;top:748px;width:14px;height:12px;background:#16a383;"></div>
<div class="r" style="left:891px;top:759px;width:14px;height:1.5px;background:#0b4f40;"></div>
<div class="r" style="left:919px;top:742px;width:105px;height:26px;background:#0b0e15;"></div>
<div class="r" style="left:957px;top:742px;width:1px;height:26px;background:#121620;"></div>
<div class="r" style="left:989px;top:742px;width:1px;height:26px;background:#121620;"></div>
<svg class="r" style="left:682px;top:759px;" width="12" height="12" viewBox="0 0 12 12"><path d="M1 0.5 L1 11.5 L3.8 9 L6 12 L7.6 11 L5.6 8 L9.5 8 Z" fill="#3a3a3a" stroke="#f0f0f0" stroke-width="1.1"/></svg>
</body></html>
